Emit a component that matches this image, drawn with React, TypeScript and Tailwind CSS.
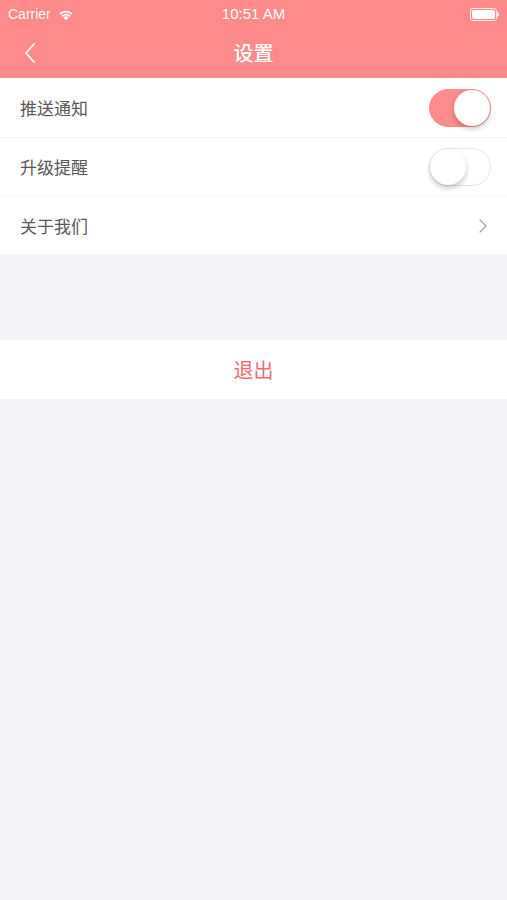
import { useState } from 'react';

const font = { fontFamily: '"Noto Sans CJK SC", "Noto Sans", sans-serif' };

function Toggle({ on, onChange }: { on: boolean; onChange: () => void }) {
  return (
    <button
      onClick={onChange}
      className={`relative w-[62px] h-[38px] rounded-full border transition-colors ${
        on ? 'bg-[#fe8c8c] border-[#fe8c8c]' : 'bg-white border-[#e5e5e5]'
      }`}
    >
      <span
        className={`absolute top-[0px] w-[36px] h-[36px] rounded-full bg-white shadow-[0_3px_5px_rgba(0,0,0,0.22)] transition-all ${
          on ? 'left-[24px]' : 'left-[0px]'
        }`}
      />
    </button>
  );
}

export default function App() {
  const [push, setPush] = useState(true);
  const [upgrade, setUpgrade] = useState(false);

  return (
    <div className="w-[507px] h-[900px] bg-[#f3f4f8]" style={font}>
      {/* Header */}
      <div className="bg-[#fe8a8a] text-white">
        <div className="h-[28px] flex items-center justify-between px-[8px] relative">
          <div className="flex items-center gap-[6px] text-[14px] text-[#fff3f3]" style={{ fontFamily: '"Liberation Sans", sans-serif' }}>
            <span>Carrier</span>
            <svg width="18" height="13" viewBox="0 0 16 12" fill="white">
              <path d="M8 11.5 L5.6 8.8 A3.5 3.5 0 0 1 10.4 8.8 Z" />
              <path d="M3.8 7 A6 6 0 0 1 12.2 7 L11.1 8.2 A4.4 4.4 0 0 0 4.9 8.2 Z" />
              <path d="M1.8 4.9 A9 9 0 0 1 14.2 4.9 L13.1 6.1 A7.4 7.4 0 0 0 2.9 6.1 Z" />
            </svg>
          </div>
          <span className="absolute left-0 right-0 text-center text-[15px] font-medium" style={{ fontFamily: '"Liberation Sans", sans-serif' }}>
            10:51 AM
          </span>
          <div className="flex items-center">
            <div className="w-[27px] h-[13px] rounded-[3px] border border-white/80 p-[1px]">
              <div className="w-full h-full bg-white rounded-[2px]" />
            </div>
            <div className="w-[2px] h-[5px] bg-white/80 rounded-r" />
          </div>
        </div>
        <div className="h-[50px] flex items-center relative">
          <svg className="absolute left-[24px]" width="12" height="20" viewBox="0 0 12 20" fill="none" stroke="white" strokeWidth="1.8" strokeLinecap="round" strokeLinejoin="round">
            <path d="M10 1 L2 10 L10 19" />
          </svg>
          <span className="w-full text-center text-[20px] font-medium">设置</span>
        </div>
      </div>

      {/* Settings list */}
      <div className="bg-white">
        <div className="h-[60px] flex items-center justify-between pl-[20px] pr-[16px] border-b border-[#f7f7f7]">
          <span className="text-[17px] text-[#585858]">推送通知</span>
          <Toggle on={push} onChange={() => setPush(!push)} />
        </div>
        <div className="h-[59px] flex items-center justify-between pl-[20px] pr-[16px] border-b border-[#f7f7f7]">
          <span className="text-[17px] text-[#585858]">升级提醒</span>
          <Toggle on={upgrade} onChange={() => setUpgrade(!upgrade)} />
        </div>
        <div className="h-[57px] flex items-center justify-between pl-[20px] pr-[20px]">
          <span className="text-[17px] text-[#585858]">关于我们</span>
          <svg width="8" height="14" viewBox="0 0 8 14" fill="none" stroke="#a0a0a0" strokeWidth="1.2" strokeLinecap="round" strokeLinejoin="round">
            <path d="M1 1 L7 7 L1 13" />
          </svg>
        </div>
      </div>

      {/* Logout */}
      <div className="mt-[86px] bg-white h-[59px] flex items-center justify-center">
        <span className="text-[20px] text-[#f26b6b]">退出</span>
      </div>
    </div>
  );
}
